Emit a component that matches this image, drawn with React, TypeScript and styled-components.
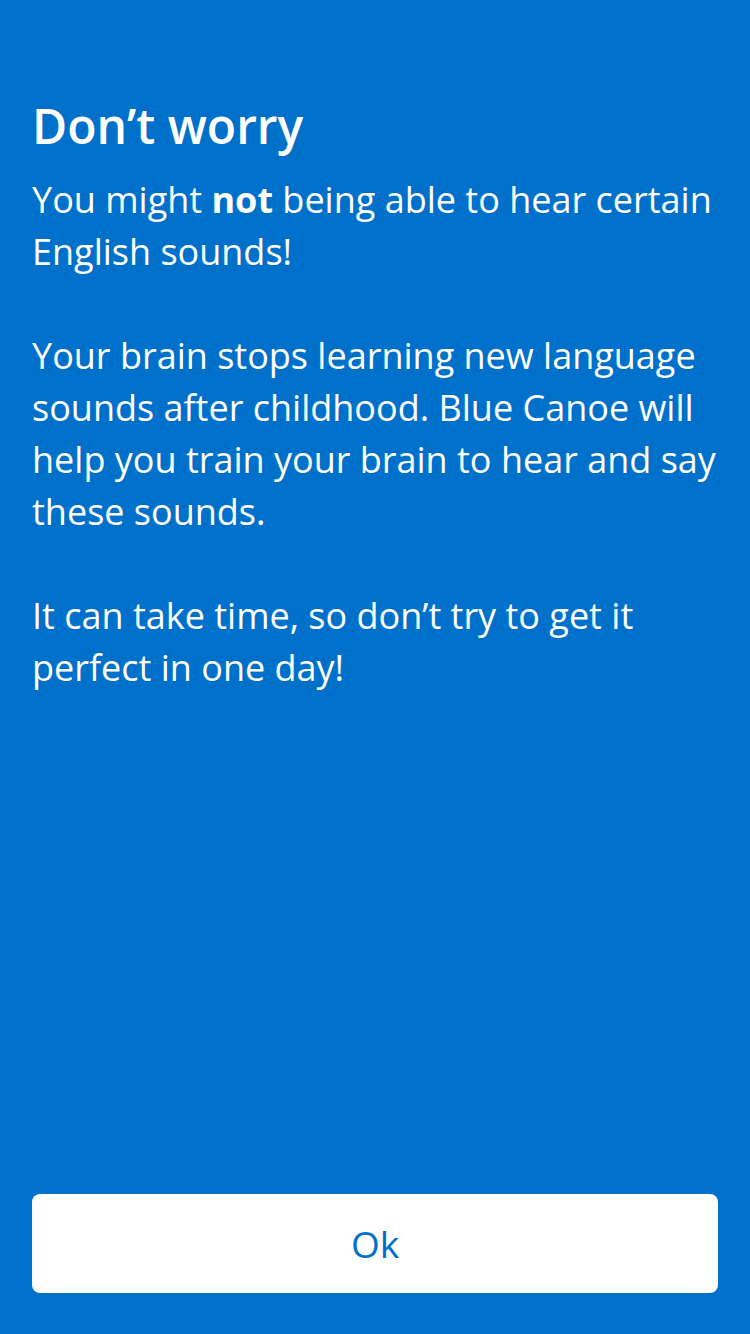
import React from "react";
import styled, { createGlobalStyle } from "styled-components";

const Global = createGlobalStyle`
  html, body { margin: 0; padding: 0; background: #0071ca; }
  body { font-family: "Open Sans", "Noto Sans", sans-serif; -webkit-font-smoothing: antialiased; }
  * { box-sizing: border-box; }
`;

const Screen = styled.div`
  min-height: 1334px;
  background: #0071ca;
  display: flex;
  flex-direction: column;
  padding: 91px 32px 41px 32px;
  color: #ffffff;
`;

const Content = styled.div`
  flex: 1;
  display: flex;
  flex-direction: column;
`;

const Title = styled.h1`
  margin: 0 0 13px 0;
  font-size: 48px;
  font-weight: 600;
  line-height: 70px;
  letter-spacing: 0;
`;

const Paragraph = styled.p`
  margin: 0 0 52px 0;
  font-size: 36px;
  line-height: 52px;
  font-weight: 400;
`;

const Strong = styled.strong`
  font-weight: 700;
`;

const OkButton = styled.button`
  width: 100%;
  height: 99px;
  border: none;
  border-radius: 8px;
  background: #ffffff;
  color: #0071ca;
  font-family: "Open Sans", "Noto Sans", sans-serif;
  font-size: 37px;
  font-weight: 400;
  cursor: pointer;
`;

export default function App() {
  return (
    <>
      <Global />
      <Screen>
        <Content>
          <Title>Don’t worry</Title>
          <Paragraph>
            You might <Strong>not</Strong> being able to hear certain English sounds!
          </Paragraph>
          <Paragraph>
            Your brain stops learning new language sounds after childhood. Blue Canoe will help you train your brain to hear and say these sounds.
          </Paragraph>
          <Paragraph>
            It can take time, so don’t try to get it perfect in one day!
          </Paragraph>
        </Content>
        <OkButton>Ok</OkButton>
      </Screen>
    </>
  );
}
